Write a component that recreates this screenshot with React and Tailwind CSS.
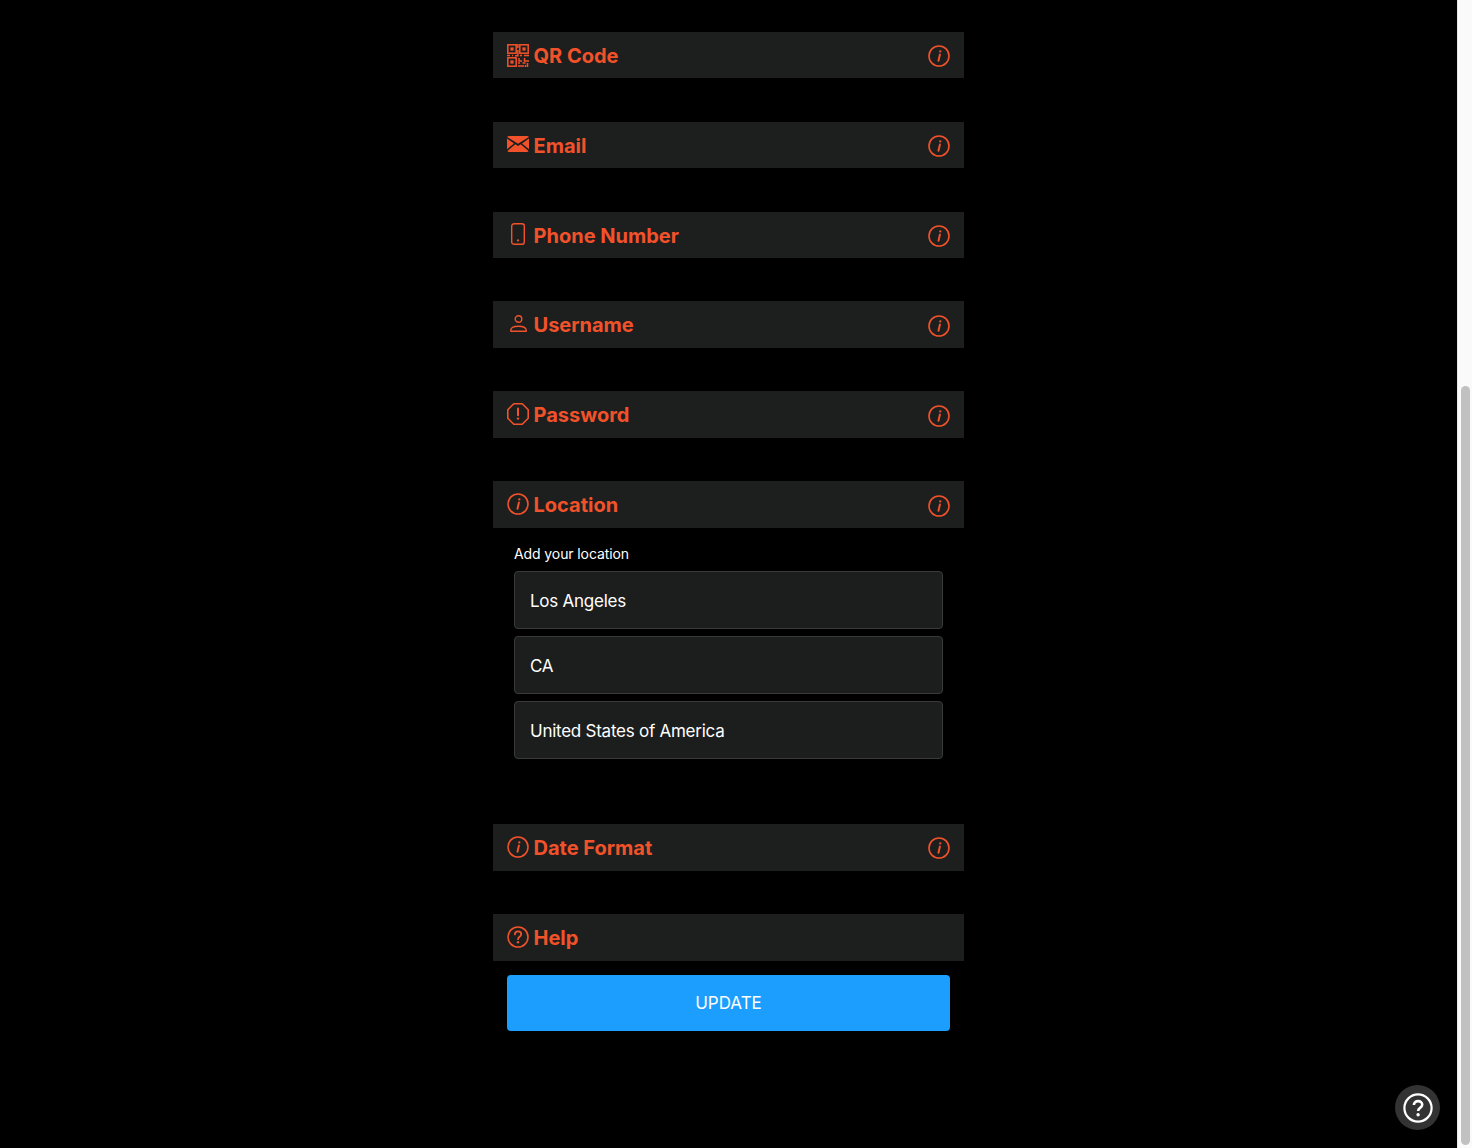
import React from "react";

function Info({ size = 22 }) {
  return (
    <svg width={size} height={size} viewBox="0 0 22 22" fill="none" stroke="currentColor" strokeWidth="1.6" className="shrink-0">
      <circle cx="11" cy="11" r="10" />
      <path d="M11.9 9.6 10.5 15.8" strokeWidth="2" strokeLinecap="round" />
      <circle cx="12.3" cy="6.4" r="1.15" fill="currentColor" stroke="none" />
    </svg>
  );
}
function Qr() {
  return (
    <svg width="22" height="23" viewBox="0 0 22 23" fill="none" stroke="currentColor" strokeWidth="1.5" className="shrink-0">
      <rect x="0.8" y="0.8" width="8.4" height="8.4" />
      <rect x="3.4" y="3.4" width="3.2" height="3.2" fill="currentColor" stroke="none" />
      <rect x="12.8" y="0.8" width="8.4" height="8.4" />
      <rect x="15.4" y="3.4" width="3.2" height="3.2" fill="currentColor" stroke="none" />
      <rect x="0.8" y="13.8" width="8.4" height="8.4" />
      <rect x="3.4" y="16.4" width="3.2" height="3.2" fill="currentColor" stroke="none" />
      <path d="M10.9 0v4M10.9 6v5.8H8M0 11.5h3M5 11.5h1M13 11.5h2M17 11.5h5M12 14v3h3M17.5 14v3H22M11 19h2M11 22h6M15.5 19h3M20.5 19v4M18.5 21v2" />
    </svg>
  );
}
function Mail() {
  return (
    <svg width="22" height="16" viewBox="0 0 22 16" className="shrink-0" fill="currentColor">
      <path d="M2 0h18c.8 0 1.5.4 1.8 1L11 7.8.2 1C.5.4 1.2 0 2 0Z" />
      <path d="M0 2.6v10.6l7-5.8-7-4.8ZM22 2.6v10.6l-7-5.8 7-4.8Z" />
      <path d="M8.3 8.3 11 10l2.7-1.7 7.8 6.6c-.3.7-1 1.1-1.7 1.1H2.2c-.7 0-1.4-.4-1.7-1.1l7.8-6.6Z" />
    </svg>
  );
}
function Phone() {
  return (
    <svg width="14" height="22" viewBox="0 0 14 22" fill="none" stroke="currentColor" strokeWidth="1.4" className="shrink-0">
      <rect x="0.7" y="0.7" width="12.6" height="20.6" rx="2.4" />
      <circle cx="7" cy="17.4" r="1.1" fill="currentColor" stroke="none" />
    </svg>
  );
}
function User() {
  return (
    <svg width="17" height="17" viewBox="0 0 17 17" fill="none" stroke="currentColor" strokeWidth="1.4" className="shrink-0">
      <circle cx="8.5" cy="4" r="3.3" />
      <path d="M.8 16.2v-.9c0-2.4 3-4 7.7-4s7.7 1.6 7.7 4v.9H.8Z" strokeLinejoin="round" />
    </svg>
  );
}
function Octagon() {
  return (
    <svg width="22" height="22" viewBox="0 0 22 22" fill="none" stroke="currentColor" strokeWidth="1.6" className="shrink-0">
      <path d="M6.8.8h8.4l6 6v8.4l-6 6H6.8l-6-6V6.8l6-6Z" strokeLinejoin="round" />
      <path d="M11 5.6v6.6" strokeWidth="2" strokeLinecap="round" />
      <circle cx="11" cy="15.6" r="1.2" fill="currentColor" stroke="none" />
    </svg>
  );
}
function Question() {
  return (
    <svg width="22" height="22" viewBox="0 0 22 22" fill="none" stroke="currentColor" strokeWidth="1.6" className="shrink-0">
      <circle cx="11" cy="11" r="10" />
      <path d="M7.9 8.4c0-1.8 1.4-3 3.2-3s3.1 1.1 3.1 2.8c0 2.6-3.2 2.5-3.2 5" strokeWidth="1.8" strokeLinecap="round" />
      <circle cx="11" cy="16.3" r="1.2" fill="currentColor" stroke="none" />
    </svg>
  );
}
function HelpBubbleIcon() {
  return (
    <svg width="30" height="30" viewBox="0 0 30 30" fill="none" stroke="currentColor" strokeWidth="2.2" className="shrink-0">
      <circle cx="15" cy="15" r="13.6" />
      <path d="M10.9 12c0-2.3 1.8-3.9 4.2-3.9s4.1 1.5 4.1 3.6c0 3.3-4.1 3.1-4.1 6.2" strokeWidth="2.6" />
      <circle cx="15.1" cy="21.7" r="1.7" fill="currentColor" stroke="none" />
    </svg>
  );
}

function Row({ icon, title, info = true, box, iconBox = "-translate-y-px", infoBox = "mt-[2px]" }) {
  return (
    <div className={`flex items-center justify-between bg-[#1d1f1f] px-[14px] ${box}`}>
      <div className="flex items-center">
        <span className={`flex w-[22px] justify-center text-[#f2522a] ${iconBox}`}>{icon}</span>
        <span className="ml-[4.5px] pt-[1px] text-[20px] font-bold leading-none text-[#f2522a]">{title}</span>
      </div>
      {info && <span className={`text-[#f2522a] ${infoBox}`}><Info /></span>}
    </div>
  );
}

function Field({ value }) {
  return (
    <div className="flex h-[58px] items-center rounded-[4px] border border-[#3a3a3a] bg-[#1c1e1e] px-[15px] pt-[3px] text-[17px] tracking-[-0.25px] text-white">
      {value}
    </div>
  );
}

export default function App() {
  return (
    <div className="relative flex h-[1148px] w-[1472px] overflow-hidden bg-black" style={{ fontFamily: 'Inter, "Liberation Sans", sans-serif' }}>
      <main className="flex flex-1 flex-col pt-[32px]">
        <div className="ml-[493px] flex w-[471px] flex-col">
          <Row icon={<Qr />} title="QR Code" box="h-[46px]" iconBox="" />
          <Row icon={<Mail />} title="Email" box="h-[46px] mt-[44px]" />
          <Row icon={<Phone />} title="Phone Number" box="h-[46px] mt-[44px]" />
          <Row icon={<User />} title="Username" box="h-[47px] mt-[43px]" />
          <Row icon={<Octagon />} title="Password" box="h-[47px] mt-[43px]" />
          <Row icon={<Info />} title="Location" box="h-[47px] mt-[43px]" />
          <div className="pl-[21px] pr-[21.5px] pt-[17px]">
            <div className="text-[14px] leading-[18px] tracking-[-0.1px] text-white">Add your location</div>
            <div className="mt-[8px] flex flex-col gap-[7px]">
              <Field value="Los Angeles" />
              <Field value="CA" />
              <Field value="United States of America" />
            </div>
          </div>
          <Row icon={<Info />} title="Date Format" box="h-[47px] mt-[65px]" infoBox="" />
          <Row icon={<Question />} title="Help" info={false} box="h-[47px] mt-[43px]" />
          <div className="mt-[14px] px-[14px]">
            <button className="flex h-[56px] w-full items-center justify-center rounded-[4px] bg-[#1c9eff] pt-[1px] text-[17px] text-white">UPDATE</button>
          </div>
        </div>
      </main>
      <aside className="flex w-[15px] shrink-0 flex-col border-l border-[#e8e8e8] bg-[#fafafa] pb-[3px] pl-[3px] pr-[2px] pt-[386px]">
        <div className="flex-1 rounded-full bg-[#c1c1c1]" />
      </aside>
      <div className="absolute left-[1395px] top-[1085px] flex h-[45px] w-[45px] items-center justify-center rounded-full bg-[#333333] text-white">
        <HelpBubbleIcon />
      </div>
    </div>
  );
}
